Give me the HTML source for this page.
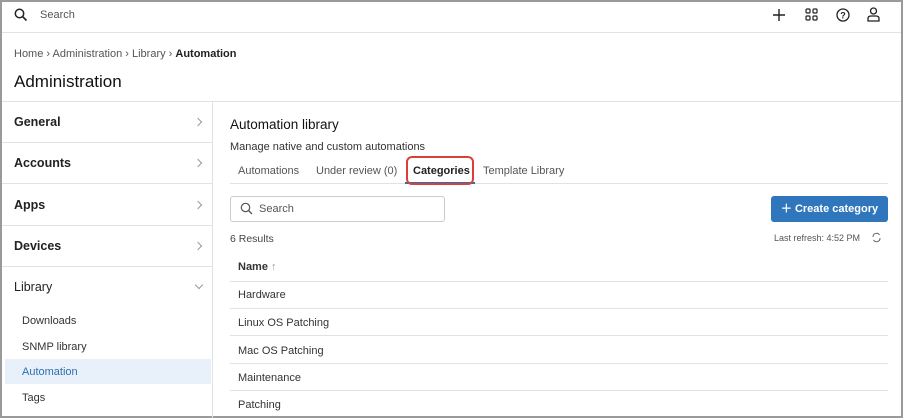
<!DOCTYPE html>
<html><head><meta charset="utf-8"><style>
*{box-sizing:border-box;margin:0;padding:0}
body{width:903px;height:420px;overflow:hidden;background:#fff;font-family:"Liberation Sans",sans-serif;color:#222;position:relative}
.frame{position:absolute;left:0;top:0;width:903px;height:418px;border:2px solid #9a9a9a}
.abs{position:absolute;white-space:nowrap}
.hl{position:absolute;height:1px;background:#e2e2e2}
.side{font-size:12.5px;font-weight:bold;color:#222}
.sub{font-size:11px;color:#333}
.chev{position:absolute;width:6px;height:6px;border-right:1px solid #999;border-top:1px solid #999;transform:rotate(45deg)}
.row{font-size:11px;color:#333}
</style></head><body>
<div class="frame"></div>
<svg class="abs" style="left:14px;top:8px" width="14" height="14" viewBox="0 0 14 14"><circle cx="5.5" cy="5.5" r="4.2" fill="none" stroke="#222" stroke-width="1.5"/><path d="M8.6 8.6L12.5 12.5" stroke="#222" stroke-width="1.6"/></svg>
<div class="abs" style="left:40px;top:9px;font-size:11px;color:#555">Search</div>
<svg class="abs" style="left:773px;top:9px" width="12" height="12"><path d="M6 0V12M0 6H12" stroke="#222" stroke-width="1.4"/></svg>
<svg class="abs" style="left:805px;top:8px" width="13" height="13"><g fill="none" stroke="#222" stroke-width="1.2"><rect x="1" y="1" width="4" height="4" rx="1"/><rect x="8" y="1" width="4" height="4" rx="1"/><rect x="1" y="8" width="4" height="4" rx="1"/><rect x="8" y="8" width="4" height="4" rx="1"/></g></svg>
<svg class="abs" style="left:836px;top:8px" width="14" height="14"><circle cx="7" cy="7" r="6" fill="none" stroke="#222" stroke-width="1.3"/><text x="7" y="10.5" font-size="9" font-weight="bold" text-anchor="middle" font-family="Liberation Sans" fill="#222">?</text></svg>
<svg class="abs" style="left:867px;top:7px" width="13" height="15"><circle cx="6.5" cy="4" r="3" fill="none" stroke="#222" stroke-width="1.3"/><path d="M1 14V11.5Q1 9 4 9H9Q12 9 12 11.5V14Z" fill="none" stroke="#222" stroke-width="1.3"/></svg>
<div class="hl" style="left:2px;top:32px;width:899px"></div>
<div class="abs" style="left:14px;top:48px;font-size:11px;color:#555">Home › Administration › Library › <b style="color:#222">Automation</b></div>
<div class="abs" style="left:14px;top:72px;font-size:17px;color:#111">Administration</div>
<div class="hl" style="left:2px;top:101px;width:899px"></div>
<div style="position:absolute;left:212px;top:101px;width:1px;height:317px;background:#e2e2e2"></div>
<div class="abs side" style="left:14px;top:115px">General</div><div class="chev" style="left:195px;top:119px"></div>
<div class="hl" style="left:2px;top:142px;width:210px"></div>
<div class="abs side" style="left:14px;top:156px">Accounts</div><div class="chev" style="left:195px;top:160px"></div>
<div class="hl" style="left:2px;top:183px;width:210px"></div>
<div class="abs side" style="left:14px;top:198px">Apps</div><div class="chev" style="left:195px;top:202px"></div>
<div class="hl" style="left:2px;top:225px;width:210px"></div>
<div class="abs side" style="left:14px;top:239px">Devices</div><div class="chev" style="left:195px;top:243px"></div>
<div class="hl" style="left:2px;top:266px;width:210px"></div>
<div class="abs side" style="left:14px;top:280px;font-weight:normal;font-size:12.5px">Library</div><div class="chev" style="left:196px;top:282px;transform:rotate(135deg)"></div>
<div class="abs sub" style="left:22px;top:315px">Downloads</div>
<div class="abs sub" style="left:22px;top:341px">SNMP library</div>
<div style="position:absolute;left:5px;top:359px;width:206px;height:25px;background:#e8f1fa"></div>
<div class="abs sub" style="left:22px;top:366px;color:#2f6fb0">Automation</div>
<div class="abs sub" style="left:22px;top:392px">Tags</div>
<div class="abs" style="left:230px;top:117px;font-size:13.5px;color:#111">Automation library</div>
<div class="abs" style="left:230px;top:141px;font-size:11px;color:#333">Manage native and custom automations</div>
<div class="abs" style="left:238px;top:165px;font-size:11px;color:#555">Automations</div>
<div class="abs" style="left:316px;top:165px;font-size:11px;color:#555">Under review (0)</div>
<div class="abs" style="left:413px;top:165px;font-size:11px;color:#222;font-weight:bold">Categories</div>
<div class="abs" style="left:483px;top:165px;font-size:11px;color:#555">Template Library</div>
<div class="hl" style="left:230px;top:183px;width:658px"></div>
<div style="position:absolute;left:405px;top:182px;width:70px;height:2px;background:#2f6fb0"></div>
<div style="position:absolute;left:406px;top:156px;width:68px;height:29px;border:2px solid #d9403a;border-radius:6px"></div>
<div style="position:absolute;left:230px;top:196px;width:215px;height:26px;border:1px solid #ccc;border-radius:3px"></div>
<svg class="abs" style="left:240px;top:202px" width="13" height="13"><circle cx="5.5" cy="5.5" r="4.2" fill="none" stroke="#555" stroke-width="1.2"/><path d="M8.5 8.5L12 12" stroke="#555" stroke-width="1.3"/></svg>
<div class="abs" style="left:259px;top:203px;font-size:11px;color:#555">Search</div>
<div style="position:absolute;left:771px;top:196px;width:117px;height:26px;background:#2f76bd;border-radius:3px;color:#fff;font-size:11px;font-weight:bold;line-height:26px;text-align:center">＋ Create category</div>
<div class="abs" style="left:230px;top:233px;font-size:10.5px;color:#444">6 Results</div>
<div class="abs" style="left:774px;top:233px;font-size:9px;color:#555">Last refresh: 4:52 PM</div>
<svg class="abs" style="left:871px;top:232px" width="11" height="11"><path d="M2 5A3.5 3.5 0 0 1 8.5 3M9 6A3.5 3.5 0 0 1 2.5 8" fill="none" stroke="#666" stroke-width="1"/></svg>
<div class="abs" style="left:238px;top:261px;font-size:11px;font-weight:bold;color:#333">Name <span style="font-weight:normal;color:#999">↑</span></div>
<div class="hl" style="left:230px;top:281px;width:658px"></div>
<div class="abs row" style="left:238px;top:289px">Hardware</div>
<div class="hl" style="left:230px;top:308px;width:658px"></div>
<div class="abs row" style="left:238px;top:317px">Linux OS Patching</div>
<div class="hl" style="left:230px;top:335px;width:658px"></div>
<div class="abs row" style="left:238px;top:345px">Mac OS Patching</div>
<div class="hl" style="left:230px;top:363px;width:658px"></div>
<div class="abs row" style="left:238px;top:372px">Maintenance</div>
<div class="hl" style="left:230px;top:390px;width:658px"></div>
<div class="abs row" style="left:238px;top:399px">Patching</div>
</body></html>
